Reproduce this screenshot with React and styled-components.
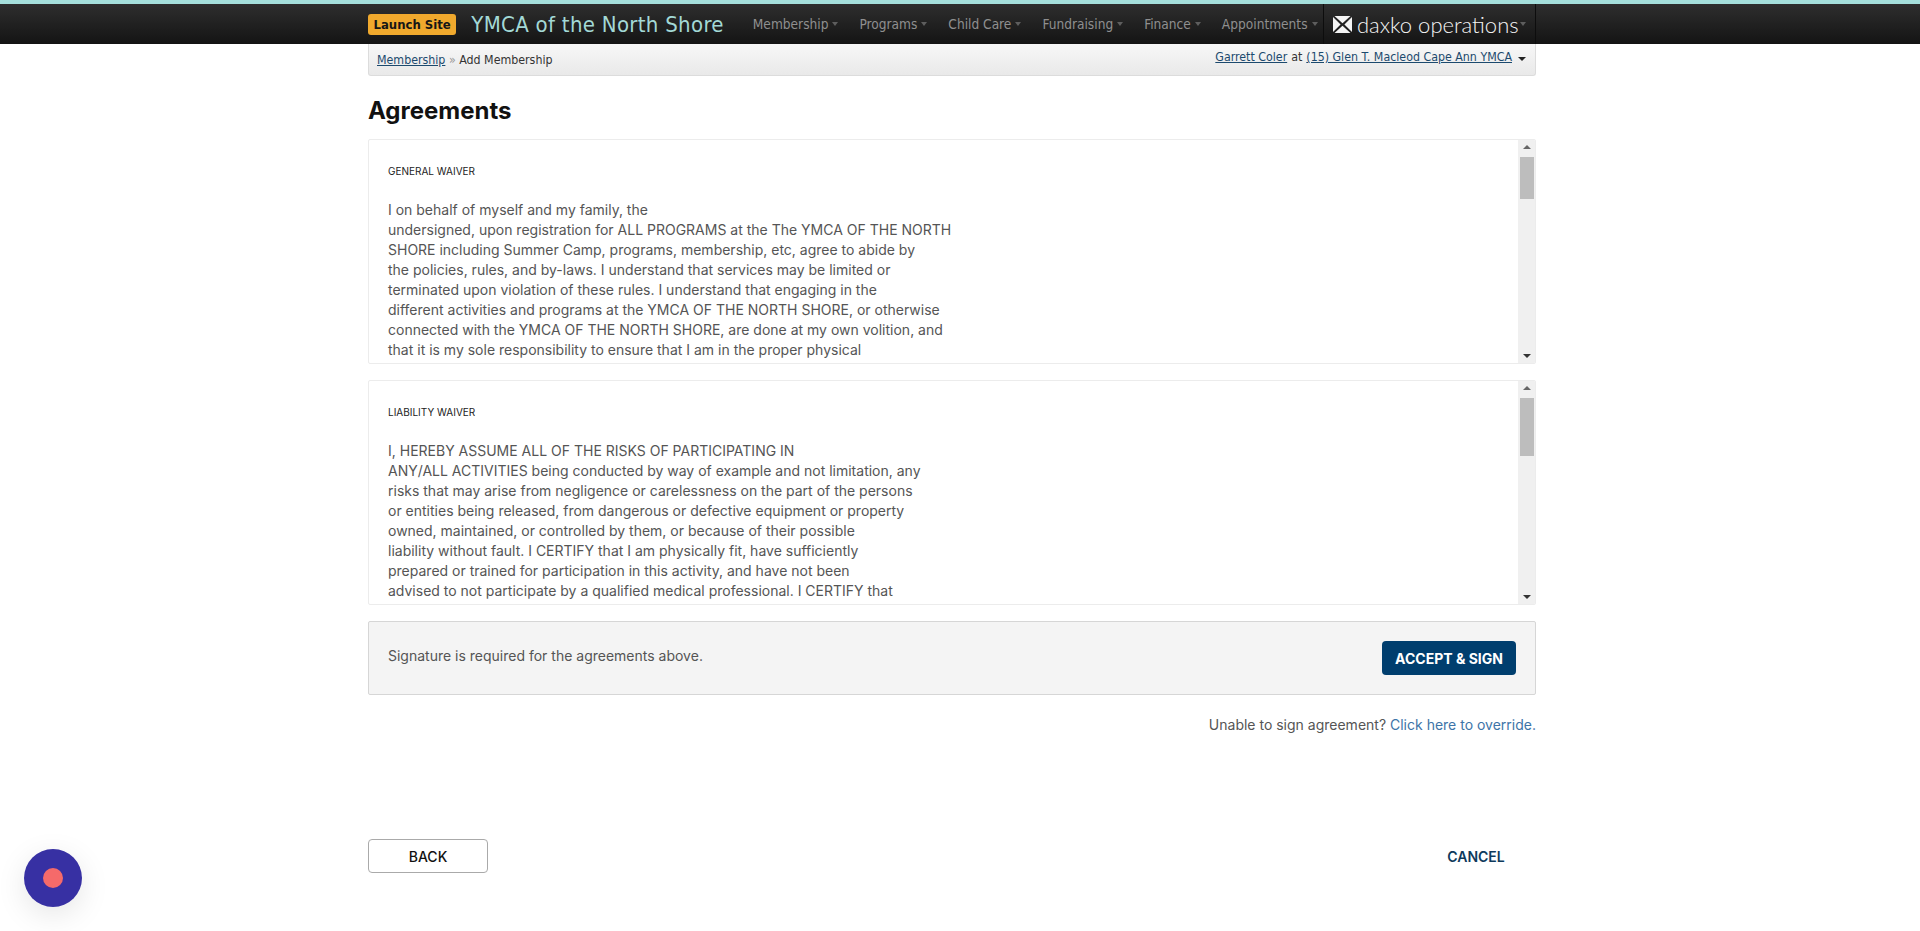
import React from "react";
import styled, { createGlobalStyle } from "styled-components";

const Global = createGlobalStyle`
  html, body { margin: 0; padding: 0; background: #fff; }
  body { font-family: Inter, "Liberation Sans", sans-serif; height: 931px; overflow: hidden; }
  * { box-sizing: border-box; }
`;
const Accent = styled.div`height: 4px; background: #a5dfdc;`;
const NavBar = styled.header`
  height: 40px;
  background: linear-gradient(#2e2e2e, #141414);
  padding-right: 16px;
  display: flex;
  justify-content: center;
`;
const NavInner = styled.div`
  width: 1168px;
  display: flex;
  align-items: center;
  font-family: "DejaVu Sans Condensed", "DejaVu Sans", sans-serif;
`;
const Launch = styled.span`
  flex: none;
  background: #f0a92d;
  color: #161616;
  border-radius: 3px;
  font-size: 13px;
  font-weight: 700;
  height: 21px;
  line-height: 21px;
  padding: 0 5.5px;
  margin-right: 15px;
  white-space: nowrap;
`;
const Title = styled.span`
  flex: none;
  color: #a3d9d6;
  font-size: 22px;
  letter-spacing: .3px;
  white-space: nowrap;
  margin-right: 29px;
`;
const NavItem = styled.span`
  flex: none;
  color: #8f8f8f;
  font-size: 13.6px;
  white-space: nowrap;
  margin-right: 21px;
  display: inline-flex;
  align-items: center;
  gap: 4px;
  &:nth-last-child(2) { margin-right: 0; }
  &::after {
    content: "";
    border: 3.5px solid transparent;
    border-top: 4px solid #5e5e5e;
    border-bottom: 0;
  }
`;
const Brand = styled.div`
  flex: none;
  height: 40px;
  width: 213px;
  margin-left: auto;
  border-left: 1px solid #0d0d0d;
  border-right: 1px solid #0d0d0d;
  display: flex;
  align-items: center;
  gap: 5px;
  padding-left: 9px;
  color: #f4f4f4;
  font-family: Lato, sans-serif;
  font-size: 22px;
  font-weight: 300;
  white-space: nowrap;
  &::after {
    content: "";
    border: 3.5px solid transparent;
    border-top: 4px solid #5e5e5e;
    border-bottom: 0;
    margin-left: -4px;
  }
`;
const PageWrap = styled.div`
  display: flex;
  justify-content: center;
  padding-right: 16px;
`;
const Page = styled.main`width: 1168px;`;
const Crumbs = styled.div`
  height: 32px;
  background: linear-gradient(#f7f7f7, #e9e9e9);
  border: 1px solid #dcdcdc;
  border-top: 0;
  border-radius: 0 0 3px 3px;
  padding: 0 9px 0 8px;
  display: flex;
  justify-content: space-between;
  font-family: "DejaVu Sans Condensed", "DejaVu Sans", sans-serif;
  font-size: 12.3px;
  color: #333;
`;
const CrumbLeft = styled.div`padding-top: 9px; span { color: #999; }`;
const CrumbRight = styled.div`padding-top: 6px; display: flex; gap: 4px; align-items: baseline; height: 21px;`;
const Lnk = styled.a`color: #1c4a6e; text-decoration: underline;`;
const Caret = styled.i`
  display: inline-block;
  margin: 0 0 2px 2px;
  border: 4px solid transparent;
  border-top: 4px solid #222;
  border-bottom: 0;
`;
const H1 = styled.h1`
  margin: 20px 0 0;
  height: 30px;
  font-size: 24px;
  line-height: 30px;
  font-weight: 700;
  color: #111;
  font-family: Inter, sans-serif;
`;
const Waiver = styled.section`
  display: flex;
  height: 225px;
  margin-top: ${p => p.$mt}px;
  border: 1px solid #ececec;
  border-radius: 2px;
  overflow: hidden;
`;
const WaiverBody = styled.div`
  flex: 1;
  padding: 25px 19px 0;
  overflow: hidden;
`;
const WaiverHead = styled.div`font-size: 10px; line-height: 13px; color: #222; margin-bottom: 22px;`;
const WaiverText = styled.div`
  font-size: 14px;
  line-height: 20px;
  color: #555;
  white-space: pre;
`;
const Track = styled.div`
  width: 17px;
  background: #f0f0f0;
  display: flex;
  flex-direction: column;
  align-items: center;
  padding-top: 5px;
`;
const Up = styled.i`border: 4px solid transparent; border-bottom: 4px solid #666; border-top: 0;`;
const Down = styled.i`border: 4px solid transparent; border-top: 4px solid #333; border-bottom: 0; margin-top: auto; margin-bottom: 5px;`;
const Thumb = styled.div`width: 14px; height: ${p => p.$h}px; background: #bdbdbd; margin-top: 8px;`;
const SignBox = styled.section`
  margin-top: 16px;
  height: 74px;
  background: #f4f4f4;
  border: 1px solid #d6d6d6;
  border-radius: 2px;
  padding: 0 19px;
  display: flex;
  justify-content: space-between;
  align-items: center;
  font-size: 14px;
  color: #555;
`;
const SignText = styled.span`padding-bottom: 6px;`;
const Primary = styled.button`
  width: 134px;
  height: 34px;
  background: #003e6e;
  color: #fff;
  border: 0;
  border-radius: 4px;
  font: 700 14px Inter, sans-serif;
`;
const Override = styled.div`
  margin-top: 21px;
  text-align: right;
  font-size: 14px;
  line-height: 18px;
  color: #555;
  a { color: #3d74a8; }
`;
const Footer = styled.div`
  margin-top: 105px;
  display: flex;
  justify-content: space-between;
  align-items: center;
`;
const Back = styled.button`
  width: 120px;
  height: 34px;
  background: #fff;
  border: 1px solid #aaa;
  border-radius: 4px;
  font: 500 14px Inter, sans-serif;
  color: #111;
`;
const Cancel = styled.button`
  width: 120px;
  height: 33px;
  background: none;
  border: 0;
  font: 600 14px Inter, sans-serif;
  color: #0e3a5c;
`;
const Bubble = styled.div`
  position: fixed;
  left: 24px;
  top: 849px;
  width: 58px;
  height: 58px;
  border-radius: 50%;
  background: #3730a3;
  box-shadow: 0 8px 30px rgba(0,0,0,.1);
  display: flex;
  align-items: center;
  justify-content: center;
  &::after { content: ""; width: 20px; height: 20px; border-radius: 50%; background: #f56a6a; }
`;

const Logo = () => (
  <svg width="19" height="17" viewBox="0 0 19 17">
    <path d="M1.5 0 H17.5 L9.5 7.2 Z M1.5 17 H17.5 L9.5 9.8 Z M0 1 L7.6 8.5 L0 16 Z M19 1 L11.4 8.5 L19 16 Z" fill="#f4f4f4" />
  </svg>
);

const nav = ["Membership", "Programs", "Child Care", "Fundraising", "Finance", "Appointments"];
const general = `I on behalf of myself and my family, the
undersigned, upon registration for ALL PROGRAMS at the The YMCA OF THE NORTH
SHORE including Summer Camp, programs, membership, etc, agree to abide by
the policies, rules, and by-laws. I understand that services may be limited or
terminated upon violation of these rules. I understand that engaging in the
different activities and programs at the YMCA OF THE NORTH SHORE, or otherwise
connected with the YMCA OF THE NORTH SHORE, are done at my own volition, and
that it is my sole responsibility to ensure that I am in the proper physical`;
const liability = `I, HEREBY ASSUME ALL OF THE RISKS OF PARTICIPATING IN
ANY/ALL ACTIVITIES being conducted by way of example and not limitation, any
risks that may arise from negligence or carelessness on the part of the persons
or entities being released, from dangerous or defective equipment or property
owned, maintained, or controlled by them, or because of their possible
liability without fault. I CERTIFY that I am physically fit, have sufficiently
prepared or trained for participation in this activity, and have not been
advised to not participate by a qualified medical professional. I CERTIFY that`;

const Box = ({ mt, title, text, thumb }) => (
  <Waiver $mt={mt}>
    <WaiverBody>
      <WaiverHead>{title}</WaiverHead>
      <WaiverText>{text}</WaiverText>
    </WaiverBody>
    <Track><Up /><Thumb $h={thumb} /><Down /></Track>
  </Waiver>
);

export default function App() {
  return (
    <>
      <Global />
      <Accent />
      <NavBar>
        <NavInner>
          <Launch>Launch Site</Launch>
          <Title>YMCA of the North Shore</Title>
          {nav.map(n => <NavItem key={n}>{n}</NavItem>)}
          <Brand><Logo /> daxko operations</Brand>
        </NavInner>
      </NavBar>
      <PageWrap>
        <Page>
          <Crumbs>
            <CrumbLeft><Lnk>Membership</Lnk> <span>»</span> Add Membership</CrumbLeft>
            <CrumbRight><Lnk>Garrett Coler</Lnk> at <Lnk>(15) Glen T. Macleod Cape Ann YMCA</Lnk><Caret /></CrumbRight>
          </Crumbs>
          <H1>Agreements</H1>
          <Box mt={13} title="GENERAL WAIVER" text={general} thumb={42} />
          <Box mt={16} title="LIABILITY WAIVER" text={liability} thumb={58} />
          <SignBox>
            <SignText>Signature is required for the agreements above.</SignText>
            <Primary>ACCEPT &amp; SIGN</Primary>
          </SignBox>
          <Override>Unable to sign agreement? <a>Click here to override.</a></Override>
          <Footer>
            <Back>BACK</Back>
            <Cancel>CANCEL</Cancel>
          </Footer>
        </Page>
      </PageWrap>
      <Bubble />
    </>
  );
}
